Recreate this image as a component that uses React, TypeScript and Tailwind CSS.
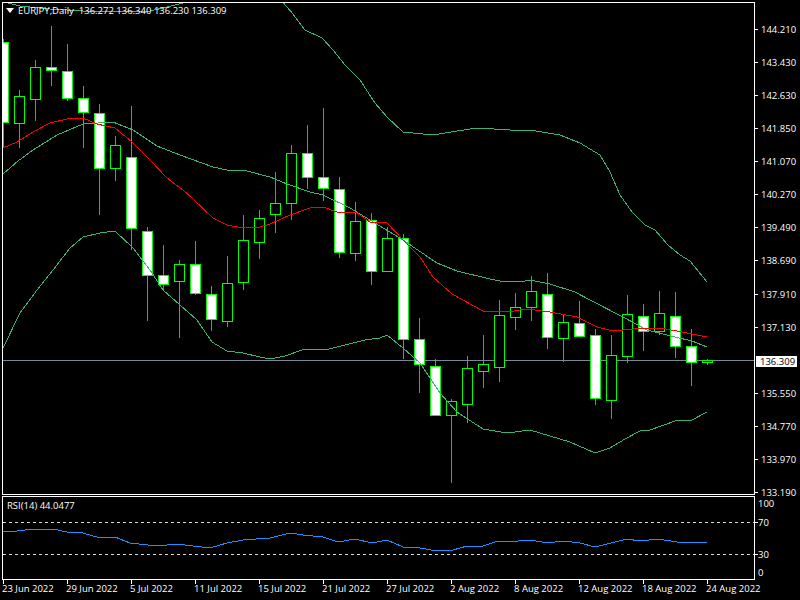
const candles: [number, number, number, number, number][] = [
  // wick top, wick bottom, body top, body bottom, filled
  [39, 148, 42, 122, 1],
  [90, 148, 96, 123, 0],
  [60, 121, 67, 99, 0],
  [26, 86, 67, 70, 1],
  [44, 101, 71, 98, 1],
  [86, 148, 98, 112, 1],
  [104, 215, 113, 168, 1],
  [136, 181, 145, 168, 0],
  [106, 250, 157, 228, 1],
  [227, 321, 231, 275, 1],
  [245, 290, 275, 284, 1],
  [260, 338, 264, 281, 0],
  [241, 295, 264, 293, 1],
  [286, 331, 294, 319, 1],
  [256, 327, 283, 321, 0],
  [215, 290, 240, 282, 0],
  [210, 259, 218, 242, 0],
  [172, 233, 203, 214, 0],
  [145, 220, 153, 203, 0],
  [125, 189, 153, 177, 1],
  [108, 201, 177, 188, 1],
  [177, 258, 189, 252, 1],
  [202, 261, 221, 253, 0],
  [213, 285, 220, 271, 1],
  [227, 272, 238, 271, 0],
  [234, 359, 238, 339, 1],
  [318, 393, 339, 364, 1],
  [359, 415, 366, 415, 1],
  [399, 483, 401, 415, 0],
  [356, 423, 368, 404, 0],
  [335, 388, 364, 371, 0],
  [300, 382, 315, 367, 0],
  [293, 330, 307, 317, 0],
  [276, 321, 291, 307, 0],
  [273, 349, 294, 337, 1],
  [315, 362, 322, 338, 0],
  [301, 336, 323, 336, 1],
  [329, 405, 335, 398, 1],
  [335, 419, 355, 400, 0],
  [295, 363, 314, 356, 0],
  [304, 351, 316, 331, 1],
  [291, 335, 313, 331, 0],
  [292, 358, 316, 346, 1],
  [329, 386, 346, 362, 1],
  [359, 365, 360, 362, 0],
];

const bandUpperA = '3,1 8,3 20,6 50,9 83,11 117,12 150,11 167,7 183,3 187,0';
const bandUpperB = '281,0 293,14 305,30 322,38 333,50 345,65 360,80 375,103 387,117 403,132 433,135 457,131 477,128 510,130 530,130 560,135 580,143 600,155 610,172 620,195 632,212 645,225 655,230 668,245 680,255 690,261 707,282';
const bandMiddle = '3,174 18,161 33,150 57,135 83,124 113,122 133,130 157,146 180,155 213,167 227,170 247,171 270,177 287,184 310,192 323,195 350,208 370,220 403,240 437,263 457,271 490,279 500,281 520,282 530,280 550,284 575,292 590,300 623,317 647,330 675,337 692,341 707,347';
const bandLower = '3,348 20,313 37,290 53,270 70,248 83,237 100,233 115,231 133,248 150,270 163,290 180,305 197,320 212,342 227,351 243,353 260,357 270,359 285,356 305,349 325,350 345,345 365,340 380,338 387,335 403,348 420,363 440,393 457,412 483,429 507,433 530,430 550,436 570,442 595,453 610,448 625,439 640,431 650,430 675,421 692,420 707,412';
const maRed = '3,148 17,142 33,132 50,123 67,119 83,118 97,124 115,128 132,142 150,160 167,178 183,190 193,199 213,218 227,225 243,228 260,227 270,224 290,215 310,208 323,207 337,212 357,213 370,222 387,223 403,240 420,257 433,277 452,294 483,311 507,312 527,309 550,312 577,317 597,327 613,331 633,329 660,328 677,331 707,337';
const rsiLine = '3,532 17,531 33,529 53,529 67,532 83,533 100,538 115,537 130,543 157,546 177,544 193,546 210,548 227,543 243,540 270,538 290,533 303,535 323,537 338,542 355,539 372,543 387,540 403,547 420,548 437,551 453,550 467,546 483,546 498,541 518,541 530,540 548,543 563,541 580,543 595,547 627,539 640,541 658,539 677,542 707,543';

const prices = ['144.210', '143.430', '142.630', '141.850', '141.070', '140.270', '139.490', '138.690', '137.910', '137.130', '136.309', '135.550', '134.770', '133.970', '133.190'];
const dates = ['23 Jun 2022', '29 Jun 2022', '5 Jul 2022', '11 Jul 2022', '15 Jul 2022', '21 Jul 2022', '27 Jul 2022', '2 Aug 2022', '8 Aug 2022', '12 Aug 2022', '18 Aug 2022', '24 Aug 2022'];

export default function App() {
  return (
    <div className="w-[800px] h-[600px] bg-black text-white overflow-hidden flex flex-col pt-[2px] pl-[2px] font-['Open_Sans',sans-serif] font-medium text-[9.5px] leading-[9px]">
      {/* Price chart */}
      <div className="flex h-[493px]">
        <div className="relative w-[753px] border border-white">
          <svg width="751" height="491" viewBox="3 3 751 491" className="block" shapeRendering="crispEdges">
            <line x1="3" y1="360.5" x2="754" y2="360.5" stroke="#778899" />
            {candles.map(([wt, wb, bt, bb, filled], i) => {
              const x = 3 + 16 * i;
              return (
                <g key={i}>
                  <line x1={x + 0.5} y1={wt} x2={x + 0.5} y2={wb} stroke="#00e000" />
                  <rect x={x - 4.5} y={bt + 0.5} width="10" height={bb - bt} fill={filled ? '#ffffff' : '#000000'} stroke="#00ff00" />
                </g>
              );
            })}
            <g fill="none" stroke="#3cb371">
              <polyline points={bandUpperA} />
              <polyline points={bandUpperB} />
              <polyline points={bandMiddle} />
              <polyline points={bandLower} />
            </g>
            <polyline points={maRed} fill="none" stroke="#ff0000" />
          </svg>
          <div className="absolute left-[3px] top-[3px] flex items-center whitespace-pre">
            <svg width="8" height="5" viewBox="0 0 8 5" className="mr-[4px]">
              <polygon points="0,0 8,0 4,5" fill="#ffffff" />
            </svg>
            <span>EURJPY,Daily  136.272 136.340 136.230 136.309</span>
          </div>
        </div>
        <div className="flex flex-col pt-[11px]">
          {prices.map(p =>
            p === '136.309' ? (
              <div key={p} className="flex h-[33.07px] shrink-0 items-center">
                <div className="flex items-center ml-px mt-[2px] w-[41px] h-[11px] bg-white text-black pl-[4px]">{p}</div>
              </div>
            ) : (
              <div key={p} className="flex h-[33.07px] shrink-0 items-center">
                <div className="w-[3px] h-px bg-white" />
                <span className="ml-[3px]">{p}</span>
              </div>
            )
          )}
        </div>
      </div>

      {/* RSI */}
      <div className="flex h-[84px] mt-px">
        <div className="relative w-[753px] border border-white">
          <svg width="751" height="82" viewBox="3 497 751 82" className="block" shapeRendering="crispEdges">
            <line x1="3" y1="522.5" x2="754" y2="522.5" stroke="#d8d8d8" strokeDasharray="3 3" />
            <line x1="3" y1="554.5" x2="754" y2="554.5" stroke="#d8d8d8" strokeDasharray="3 3" />
            <polyline points={rsiLine} fill="none" stroke="#1e90ff" />
          </svg>
          <div className="absolute left-[4px] top-[4px] whitespace-pre">RSI(14) 44.0477</div>
        </div>
        <div className="flex flex-col pt-[2px]">
          <div className="flex h-[10px] items-center pl-[3px]">100</div>
          <div className="flex h-[12px] items-center mt-[8px]">
            <div className="w-[3px] h-px bg-white" />
            <span>70</span>
          </div>
          <div className="flex h-[12px] items-center mt-[20px]">
            <div className="w-[3px] h-px bg-white" />
            <span>30</span>
          </div>
          <div className="flex h-[12px] items-center mt-[6px] pl-[3px]">0</div>
        </div>
      </div>

      {/* Dates */}
      <div className="flex ml-px">
        {dates.map(d => (
          <div key={d} className="w-[64px] shrink-0 flex flex-col">
            <div className="w-px h-[4px] bg-white" />
            <span className="whitespace-nowrap -ml-px">{d}</span>
          </div>
        ))}
      </div>
    </div>
  );
}
